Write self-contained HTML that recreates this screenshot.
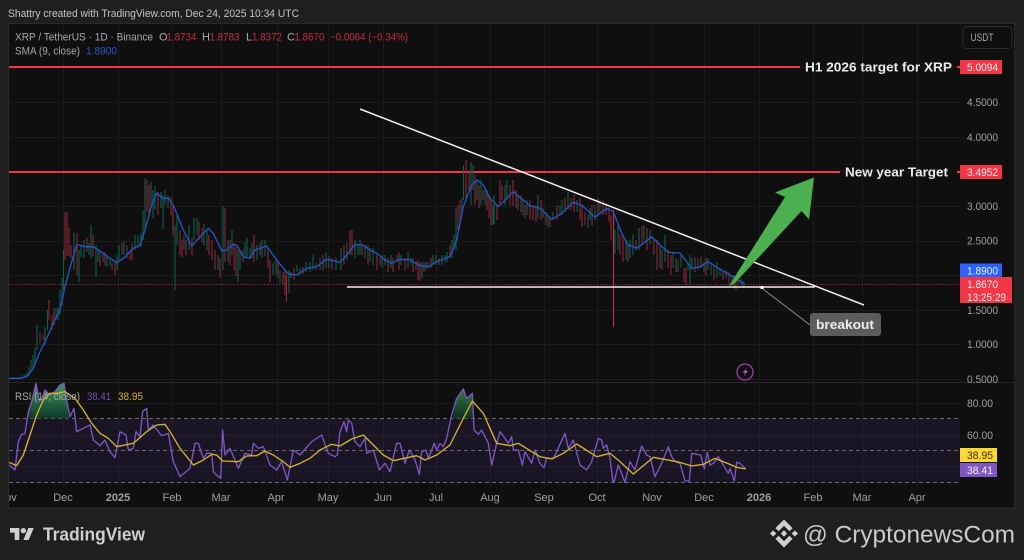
<!DOCTYPE html>
<html><head><meta charset="utf-8"><title>XRP / TetherUS chart</title>
<style>
html,body{margin:0;padding:0;background:#1f1f1f;width:1024px;height:560px;overflow:hidden}
svg{display:block;filter:blur(.35px)}
text{font-family:"Liberation Sans",sans-serif}
.ax{fill:#a0a0a0;font-size:11px}
.tm{fill:#a0a0a0;font-size:11px;text-anchor:middle}
.lg{fill:#a8a8a8;font-size:11px}
.rd{fill:#c62d3d;font-size:11px}
.lb{font-size:11px;fill:#f2f2f2}
.an{fill:#ececec;font-size:13px;font-weight:bold}
.sr{fill:none;stroke-linejoin:round;stroke-width:4}
</style></head><body>
<svg width="1024" height="560" viewBox="0 0 1024 560" xmlns="http://www.w3.org/2000/svg">
<defs>
<clipPath id="cp"><rect x="9" y="23" width="951" height="485"/></clipPath>
<clipPath id="cr"><rect x="9" y="382" width="951" height="101"/></clipPath>
<linearGradient id="gf" x1="0" y1="0" x2="0" y2="1"><stop offset="0" stop-color="#3f9a58"/><stop offset="1" stop-color="#0f3a2a"/></linearGradient>
</defs>
<rect width="1024" height="560" fill="#1f1f1f"/>
<text x="8" y="17" font-size="11" fill="#c4c4c4" textLength="291" lengthAdjust="spacingAndGlyphs">Shattry created with TradingView.com, Dec 24, 2025 10:34 UTC</text>
<rect x="8.5" y="23.5" width="1006" height="484.5" fill="#0f0f0f" stroke="#2a2a2a"/>

<!-- grid -->
<path d="M9 67.5H960M9 102.5H960M9 137.5H960M9 171.5H960M9 206.5H960M9 241.5H960M9 275.5H960M9 310.5H960M9 344.5H960M9 379.5H960M9 403.5H960M9 435.5H960M9 466.5H960M63.5 24V488M118.5 24V488M172.5 24V488M221.5 24V488M277.5 24V488M328.5 24V488M383.5 24V488M436.5 24V488M490.5 24V488M544.5 24V488M597.5 24V488M652.5 24V488M704.5 24V488M759.5 24V488M813.5 24V488M862.5 24V488M917.5 24V488" stroke="#1b1b1b" fill="none"/>
<path d="M9 382.5H1014" stroke="#262626"/>

<!-- RSI band -->
<rect x="9" y="419" width="951" height="64" fill="#1a1524"/>
<path d="M9 466.5H960M9 435.5H960" stroke="#231f2c"/>
<path d="M63.5 419V483M118.5 419V483M172.5 419V483M221.5 419V483M277.5 419V483M328.5 419V483M383.5 419V483M436.5 419V483M490.5 419V483M544.5 419V483M597.5 419V483M652.5 419V483M704.5 419V483M759.5 419V483M813.5 419V483M862.5 419V483M917.5 419V483" stroke="#221e2c"/>
<path d="M9 418.5H960M9 450.5H960M9 482.5H960" stroke="#6a6a6a" stroke-dasharray="4 3"/>

<!-- red horizontal target lines -->
<path d="M9 67H800M957 67H960M9 172H840M957 172H960" stroke="#f23645" stroke-width="2" fill="none"/>

<!-- candles -->
<path fill="none" stroke="#8e2636" stroke-width="1.1" d="M40 332V343M43 335V340M49 300V320M52 315V330M54 308V325M65 212V260M67 212V256M69 228V256M71 245V258M77 233V275M87 238V252M93 235V256M100 250V266M105 252V266M112 262V270M115 263V275M124 241V255M130 250V260M132 243V260M147 180V212M149 185V218M158 192V215M171 197V215M173 205V235M180 230V255M182 240V257M186 240V255M192 238V255M199 222V240M202 228V242M209 235V255M212 240V260M215 250V270M220 258V278M225 208V262M230 240V265M234 245V270M236 247V276M243 250V262M254 235V262M260 243V255M268 248V268M270 260V282M278 262V278M283 272V285M285 270V295M286.5 275V302M294 268V280M303 267V274M316 263V270M323 255V270M332 258V270M344 245V265M350 230V255M352 230V255M362 245V255M368 245V265M377 255V270M380 258V265M388 258V272M393 258V272M399 252V270M405 258V270M413 258V272M418 260V280M420 262V281M424 262V272M431 258V268M439 258V265M450 245V258M458 205V230M460 200V225M466 160V200M469 170V190M475 175V205M479 185V208M483 190V200M487 190V210M489 195V218M491 200V225M497 205V220M500 180V205M502 185V200M510 185V205M513 180V206M516 190V208M521 195V212M525 205V218M530 200V220M533 205V220M536 205V222M541 200V220M546 212V225M550 218V227M557 205V220M565 198V212M571 198V210M574 195V212M580 198V220M582 205V227M585 212V225M592 205V226M598 198V215M603 200V215M606 203V215M609 208V222M611 215V240M620 235V255M623 235V262M628 245V262M636 240V250M642 226V245M647 228V250M654 240V255M657 240V270M662 250V270M668 250V268M671 255V275M676 258V272M684 268V282M686 268V285M695 257V272M701 257V268M706 258V275M714 266V280M723 272V280M729 272V285M734 275V288M738 278V285"/>
<path fill="none" stroke="#0e5f50" stroke-width="1.1" d="M20 377V379M22 375V378M25 374V377M27 372V376M29 367V376M31 360V372M33 355V370M35 348V365M37 325V350M45 327V345M47.5 310V330M56 308V320M58 307V320M60 290V315M62 278V305M63.5 250V290M74 232V270M79 250V282M81 245V257M84 240V258M89 243V255M91 225V258M96 245V277M98 250V262M103 253V262M107 256V267M110 260V266M117 255V270M119 245V260M122 243V255M127 245V258M135 235V250M138 235V248M141 233V247M143 210V240M145 178V230M151 182V205M153 190V218M155 186V210M161 192V208M163 195V229M165 190V205M168 195V208M175 225V290M177 215V245M184 235V250M189 225V250M194 218V240M197 218V235M204 224V245M207 230V250M218 255V270M223 206V270M228 240V262M232 230V255M238 250V282M240 250V270M245 242V258M247 238V258M250 248V258M252 243V258M257 245V260M262 240V258M265 240V256M273 263V275M276 260V275M280 270V283M289 270V293M291 272V278M297 265V272M300 268V275M306 262V272M310 262V272M313 255V270M320 258V270M326 252V268M329 256V268M336 258V270M341 248V270M347 243V260M355 240V258M358 245V255M360 240V255M365 245V258M370 248V262M373 248V265M382 255V268M385 255V265M391 255V268M397 255V262M401 255V265M408 252V268M411 258V265M416 262V270M422 262V278M426 262V270M428 262V268M433 255V265M436 255V265M442 255V265M445 255V262M447 252V262M452 240V258M454 235V250M456 208V250M462 198V215M463.5 165V200M471 162V205M473 165V190M477 180V200M481 180V205M485 190V205M493 205V225M494 195V224M505 185V205M507 180V200M518 195V210M523 200V215M527 200V215M538 195V218M543 208V218M548 215V228M553 212V220M560 205V216M562 200V215M568 192V210M577 200V212M588 215V228M590 208V220M595 205V220M600 200V212M615 230V254M618 225V250M626 240V260M630 240V258M633 235V255M639 228V250M644 225V240M650 230V245M660 245V268M665 235V262M673 252V268M678 260V272M681 255V268M688 262V270M690 255V285M692 258V270M698 258V270M704 262V272M708 258V270M711 265V275M717 262V278M720 268V276M726 270V278M732 275V285M736 280V290M741 278V285M743 281V286"/>
<path d="M613.5 210V327" stroke="#b83549" stroke-width="1.2"/>

<!-- price dotted -->
<path d="M9 284.5H960" stroke="#8f2431" stroke-dasharray="1.5 1.5"/>

<!-- SMA -->
<polyline fill="none" stroke="#2458c8" stroke-width="1.3" stroke-linejoin="round" points="9,378.3 20,378.3 26.7,376.7 33.3,368.3 40,351.7 46.7,338.3 53.3,323.3 60,310 65,286.7 71.7,261.7 76.7,245 80,245 85,246.7 93.3,246.7 103.3,253.3 110,258.3 116.7,262.7 123.3,258.3 133.3,248.3 140,245 145,230 151.7,205 156.7,193.3 163.3,198.3 168.3,198.3 173.3,205 183.3,230 191.7,246 200,236.7 208.3,228.3 213.3,233.3 221.7,250.7 226.7,250 233.3,244.3 236.7,245 243.3,256.7 250,258.3 255,250 266.7,246 276.7,260 288.3,274 296.7,275 306.7,268.3 316.7,266.7 326.7,259.3 340,262.3 346.7,255 355,244.3 363,245 370,250 376.7,253.3 385,260 391.7,263.3 400,259.3 410,260 420,265.7 428.3,266.7 436.7,261.7 450,256.7 456.7,240 463.3,206.7 471.7,185 477.3,180 483.3,185 490,198.3 498.3,206.7 513.3,191.7 523.3,200 530,206 540,208.3 551.7,219.3 561.7,213.3 573.3,202.3 581.7,205 595,217.3 606.7,208.3 613.3,211.7 621.7,233.3 628.3,245 636.7,248.3 651.7,236.7 660,245 668.3,252.3 680,253 691.7,268.3 700,266.7 708.3,261.7 716.7,267.3 730,275 745,284"/>

<!-- trend lines -->
<path d="M360 109L864 305" stroke="#f0f0f0" stroke-width="1.5"/>
<path d="M347 287H815" stroke="#f0f0f0" stroke-width="1.6"/>
<path d="M763 289L810 325" stroke="#8c8c8c"/>
<rect x="760.5" y="286" width="3" height="3" fill="#fff"/>

<!-- arrow -->
<polygon points="814,177.5 775,192.5 785,197 729,286 734,284 801.5,211 809,219.5" fill="#4caf50"/>

<!-- breakout -->
<rect x="810" y="313" width="71" height="23" rx="3" fill="#5c5c5c"/>
<text x="816" y="329" class="an" textLength="58" lengthAdjust="spacingAndGlyphs">breakout</text>

<!-- annotations -->
<text x="805" y="71.5" class="an" textLength="147" lengthAdjust="spacingAndGlyphs">H1 2026 target for XRP</text>
<text x="845" y="176.5" class="an" textLength="103" lengthAdjust="spacingAndGlyphs">New year Target</text>

<!-- lightning icon -->
<circle cx="745" cy="372" r="8" fill="none" stroke="#a13bb0" stroke-width="1.3"/>
<path d="M747 367.5L742.5 372.8H745.2L743.5 376.5L748 371H745.3Z" fill="#b65ac6"/>

<!-- RSI fills -->
<g clip-path="url(#cr)">
<g transform="translate(0,375) scale(.33333)">
<polygon fill="url(#gf)" points="85,130 85,110 95,80 108,25 118,80 125,70 135,45 150,60 165,50 180,30 192,25 200,75 207,130"/>
<polyline class="sr" stroke="#7e57c2" points="27,270 45,285 55,200 65,178 75,175 85,110 95,80 108,25 118,80 125,70 135,45 150,60 165,50 180,30 192,25 200,75 210,125 222,100 230,170 250,160 270,150 280,195 300,212 315,195 330,230 345,248 360,170 378,180 385,225 400,220 408,170 420,185 428,110 440,100 445,165 460,150 485,182 505,175 520,260 540,305 570,280 585,205 595,205 610,250 620,235 635,235 640,290 650,300 662,310 668,165 675,240 690,220 715,280 735,235 755,240 760,205 775,220 790,215 810,270 830,285 845,260 862,315 880,225 900,240 935,200 965,180 985,235 1005,245 1012,240 1020,170"/>
<polyline class="sr" stroke="#d4b42a" points="27,262 50,272 70,240 90,180 110,120 130,75 150,55 170,55 195,50 225,70 250,105 275,145 300,175 325,190 350,215 400,205 440,170 470,150 495,148 510,170 540,220 580,270 610,255 635,238 650,240 668,258 715,260 740,243 770,242 795,228 820,240 850,260 870,277 900,265 930,250 960,225 995,208 1020,213"/>
</g>
<g transform="translate(340,375) scale(.33333)">
<polygon fill="url(#gf)" opacity=".75" points="338,130 350,70 370,42 380,70 397,55 397,130"/>
<polyline class="sr" stroke="#7e57c2" points="0,170 12,140 20,170 25,135 35,145 45,200 60,215 75,190 80,235 100,225 118,285 135,265 150,290 170,205 180,205 195,265 208,225 225,255 238,298 245,230 258,225 265,250 283,205 290,225 300,205 310,215 320,190 335,120 350,70 370,42 380,70 397,55 402,165 415,178 425,165 445,205 455,270 470,205 480,170 495,190 505,205 515,185 520,225 535,225 547,270 555,230 575,265 585,225 600,265 612,278 620,250 640,250 650,230 675,175 685,220 700,195 720,270 740,285 755,260 775,190 785,195 790,220 800,210 810,250 820,330 835,270 855,322 870,260 885,285 905,213 920,240 930,245 945,305 965,265 985,215 995,245 1005,260 1020,265"/>
<polyline class="sr" stroke="#d4b42a" points="0,213 35,192 70,180 100,210 130,240 160,257 230,242 255,255 290,240 330,210 370,130 397,78 430,115 470,205 510,212 535,205 600,245 635,252 670,235 710,207 770,245 810,235 840,260 880,297 940,247 1020,262"/>
</g>
<g transform="translate(680,375) scale(.33333)">
<polyline class="sr" stroke="#7e57c2" points="0,265 15,318 28,318 35,235 50,238 62,240 73,282 82,232 90,270 100,265 115,245 125,262 145,295 150,280 163,318 170,262 180,265 197,282"/>
<polyline class="sr" stroke="#d4b42a" points="0,262 35,273 70,268 105,250 150,268 170,277 197,282"/>
</g>
</g>

<!-- legends -->
<text x="15" y="40.5" class="lg" textLength="138" lengthAdjust="spacingAndGlyphs">XRP / TetherUS · 1D · Binance</text>
<text x="159" y="40.5" class="lg">O</text><text x="166.5" y="40.5" class="rd" textLength="30" lengthAdjust="spacingAndGlyphs">1.8734</text>
<text x="202" y="40.5" class="lg">H</text><text x="209.5" y="40.5" class="rd" textLength="30" lengthAdjust="spacingAndGlyphs">1.8783</text>
<text x="246" y="40.5" class="lg">L</text><text x="252" y="40.5" class="rd" textLength="30" lengthAdjust="spacingAndGlyphs">1.8372</text>
<text x="287" y="40.5" class="lg">C</text><text x="294.5" y="40.5" class="rd" textLength="30" lengthAdjust="spacingAndGlyphs">1.8670</text>
<text x="330" y="40.5" class="rd" textLength="78" lengthAdjust="spacingAndGlyphs">−0.0064 (−0.34%)</text>
<text x="15" y="54.5" class="lg" textLength="65" lengthAdjust="spacingAndGlyphs">SMA (9, close)</text>
<text x="86" y="54.5" font-size="11" fill="#2458c8" textLength="31" lengthAdjust="spacingAndGlyphs">1.8900</text>
<text x="15" y="400" class="lg" textLength="65" lengthAdjust="spacingAndGlyphs">RSI (14, close)</text>
<text x="87" y="400" font-size="11" fill="#6f50ad" textLength="24" lengthAdjust="spacingAndGlyphs">38.41</text>
<text x="118" y="400" font-size="11" fill="#d4b42a" textLength="25" lengthAdjust="spacingAndGlyphs">38.95</text>

<!-- USDT -->
<rect x="963" y="26.5" width="49" height="22" rx="4" fill="#0f0f0f" stroke="#2c2c2c"/>
<text x="970.5" y="41" font-size="11" fill="#a8a8a8" textLength="23" lengthAdjust="spacingAndGlyphs">USDT</text>

<!-- price axis -->
<text x="967" y="106" class="ax" textLength="31" lengthAdjust="spacingAndGlyphs">4.5000</text>
<text x="967" y="141" class="ax" textLength="31" lengthAdjust="spacingAndGlyphs">4.0000</text>
<text x="967" y="210" class="ax" textLength="31" lengthAdjust="spacingAndGlyphs">3.0000</text>
<text x="967" y="244.5" class="ax" textLength="31" lengthAdjust="spacingAndGlyphs">2.5000</text>
<text x="967" y="314" class="ax" textLength="31" lengthAdjust="spacingAndGlyphs">1.5000</text>
<text x="967" y="348" class="ax" textLength="31" lengthAdjust="spacingAndGlyphs">1.0000</text>
<text x="967" y="383" class="ax" textLength="31" lengthAdjust="spacingAndGlyphs">0.5000</text>
<text x="967" y="407" class="ax" textLength="26" lengthAdjust="spacingAndGlyphs">80.00</text>
<text x="967" y="439" class="ax" textLength="26" lengthAdjust="spacingAndGlyphs">60.00</text>

<rect x="960" y="60" width="42" height="14" fill="#f23645"/>
<text x="967" y="71" class="lb" textLength="31" lengthAdjust="spacingAndGlyphs">5.0094</text>
<rect x="960" y="165" width="42" height="14" fill="#f23645"/>
<text x="967" y="176" class="lb" textLength="31" lengthAdjust="spacingAndGlyphs">3.4952</text>
<rect x="960" y="263.5" width="42" height="14" fill="#2962ff"/>
<text x="967" y="274.5" class="lb" textLength="31" lengthAdjust="spacingAndGlyphs">1.8900</text>
<rect x="960" y="277" width="52" height="26" fill="#f23645"/>
<text x="967" y="288" class="lb" textLength="31" lengthAdjust="spacingAndGlyphs">1.8670</text>
<text x="967" y="301" class="lb" textLength="39" lengthAdjust="spacingAndGlyphs">13:25:29</text>
<rect x="960" y="448" width="37" height="14" fill="#fdd835"/>
<text x="967" y="459" font-size="11" fill="#3c3200" textLength="26" lengthAdjust="spacingAndGlyphs">38.95</text>
<rect x="960" y="463" width="37" height="14" fill="#7e57c2"/>
<text x="967" y="474" class="lb" textLength="26" lengthAdjust="spacingAndGlyphs">38.41</text>

<!-- time axis -->
<g clip-path="url(#cp)">
<text x="7" y="501" class="tm">Nov</text>
</g>
<text x="63" y="501" class="tm">Dec</text>
<text x="118" y="501" class="tm" font-weight="bold">2025</text>
<text x="172" y="501" class="tm">Feb</text>
<text x="221" y="501" class="tm">Mar</text>
<text x="276" y="501" class="tm">Apr</text>
<text x="328" y="501" class="tm">May</text>
<text x="383" y="501" class="tm">Jun</text>
<text x="436" y="501" class="tm">Jul</text>
<text x="490" y="501" class="tm">Aug</text>
<text x="544" y="501" class="tm">Sep</text>
<text x="597" y="501" class="tm">Oct</text>
<text x="652" y="501" class="tm">Nov</text>
<text x="704" y="501" class="tm">Dec</text>
<text x="759" y="501" class="tm" font-weight="bold">2026</text>
<text x="813" y="501" class="tm">Feb</text>
<text x="862" y="501" class="tm">Mar</text>
<text x="917" y="501" class="tm">Apr</text>

<!-- TradingView logo -->
<g transform="translate(10,525.3) scale(.667)" fill="#d0d0d0">
<path d="M14 22H7V11H0V4h14v18zM28 22h-8l7.5-18h8L28 22z"/><circle cx="20" cy="8" r="4"/>
</g>
<text x="43" y="540.5" font-size="18.5" font-weight="bold" fill="#cfcfcf" textLength="102" lengthAdjust="spacingAndGlyphs">TradingView</text>

<!-- Binance logo and handle -->
<g transform="translate(770,519.5) scale(.221)" fill="#cfcfcf">
<path d="M38.73 53.2l24.59-24.58 24.6 24.6 14.3-14.31L63.32 0 24.42 38.9l14.31 14.3zM0 63.31l14.3-14.31 14.31 14.31-14.31 14.3zM38.73 73.41l24.59 24.59 24.6-24.6 14.31 14.29-38.9 38.91-38.91-38.88v-.03l14.31-14.28zM97.99 63.31l14.3-14.31 14.32 14.31-14.31 14.3zM77.83 63.3L63.32 48.78 52.59 59.51l-1.24 1.23-2.54 2.54 0 .03 14.51 14.5 14.51-14.52.01-.01z"/>
</g>
<text x="803" y="542.5" font-size="24" fill="#cacaca" textLength="212" lengthAdjust="spacingAndGlyphs">@ CryptonewsCom</text>
</svg>
</body></html>
